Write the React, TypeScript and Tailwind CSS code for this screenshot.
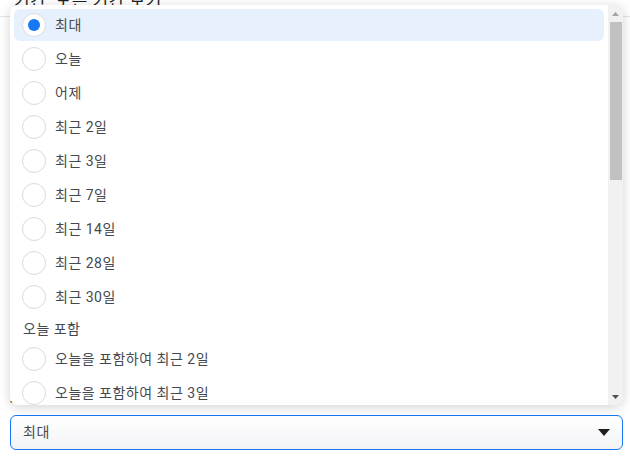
import React from 'react'

type Item = { label: string; header?: boolean }

const items: Item[] = [
  { label: '최대' },
  { label: '오늘' },
  { label: '어제' },
  { label: '최근 2일' },
  { label: '최근 3일' },
  { label: '최근 7일' },
  { label: '최근 14일' },
  { label: '최근 28일' },
  { label: '최근 30일' },
  { label: '오늘 포함', header: true },
  { label: '오늘을 포함하여 최근 2일' },
  { label: '오늘을 포함하여 최근 3일' },
  { label: '오늘을 포함하여 최근 7일' },
  { label: '오늘을 포함하여 최근 14일' },
  { label: '오늘을 포함하여 최근 28일' },
  { label: '오늘을 포함하여 최근 30일' },
]

const font = { fontFamily: 'Roboto, "Noto Sans CJK KR", sans-serif' }

function Radio({ checked }: { checked: boolean }) {
  return (
    <span className="flex h-6 w-6 shrink-0 items-center justify-center rounded-full border border-[#d8dadf] bg-white">
      {checked && <span className="h-3 w-3 rounded-full bg-[#1877f2]" />}
    </span>
  )
}

// drawn scrollbar, the headless browser hides native ones
function Scrollbar() {
  return (
    <div className="flex w-[15px] shrink-0 flex-col items-center bg-[#f1f1f1]">
      <div className="flex h-[17px] items-center justify-center">
        <svg width="7" height="4" viewBox="0 0 7 4">
          <path d="M0 4 L3.5 0 L7 4 Z" fill="#a3a3a3" />
        </svg>
      </div>
      <div className="h-[158px] w-[12px] bg-[#c1c1c1]" />
      <div className="flex-1" />
      <div className="flex h-[17px] items-center justify-center">
        <svg width="7" height="4" viewBox="0 0 7 4">
          <path d="M0 0 L7 0 L3.5 4 Z" fill="#505050" />
        </svg>
      </div>
    </div>
  )
}

export default function App() {
  const selected = '최대'
  return (
    <div className="relative h-[456px] w-[630px] overflow-hidden bg-white text-[#1c1e21]" style={font}>
      {/* page behind */}
      <div className="h-[26px] border-b border-[#e4e6eb] px-[14px]">
        <div className="mt-[-9px] text-[17px] leading-[20px] tracking-[0.5px] text-[#1c1e21]">기간: 모든 기간 보기</div>
      </div>
      <div className="px-[10px] pt-[372px]">
        <div className="mb-[8px] text-[13px] font-semibold leading-[18px]">보고 기간</div>
        <button className="flex h-[35px] w-[613px] items-center justify-between rounded-md border border-[#1877f2] bg-gradient-to-b from-white to-[#f2f3f5] pl-[12px] pr-[12px] text-[14px] tracking-[0.5px] text-[#444950]">
          <span>최대</span>
          <svg width="12" height="7" viewBox="0 0 12 7">
            <path d="M0 0 H12 L6 7 Z" fill="#1c1e21" />
          </svg>
        </button>
      </div>

      {/* dropdown menu */}
      <div className="absolute left-[10px] top-[5px] flex h-[400px] w-[613px] overflow-hidden rounded-lg bg-white shadow-[0_2px_12px_rgba(0,0,0,0.18)]">
        <div className="flex-1 overflow-hidden p-[4px]">
          {items.map((it) =>
            it.header ? (
              <div key={it.label} className="flex h-[28px] items-center pl-[9px] text-[14px] tracking-[0.5px] text-[#444950]">
                {it.label}
              </div>
            ) : (
              <div
                key={it.label}
                className={`mb-[2px] flex h-8 items-center rounded-md pl-[8px] text-[14px] tracking-[0.5px] ${
                  it.label === selected ? 'bg-[#e7f0fd]' : ''
                }`}
              >
                <Radio checked={it.label === selected} />
                <span className="ml-[9px] text-[#444950]">{it.label}</span>
              </div>
            )
          )}
        </div>
        <Scrollbar />
      </div>
    </div>
  )
}
